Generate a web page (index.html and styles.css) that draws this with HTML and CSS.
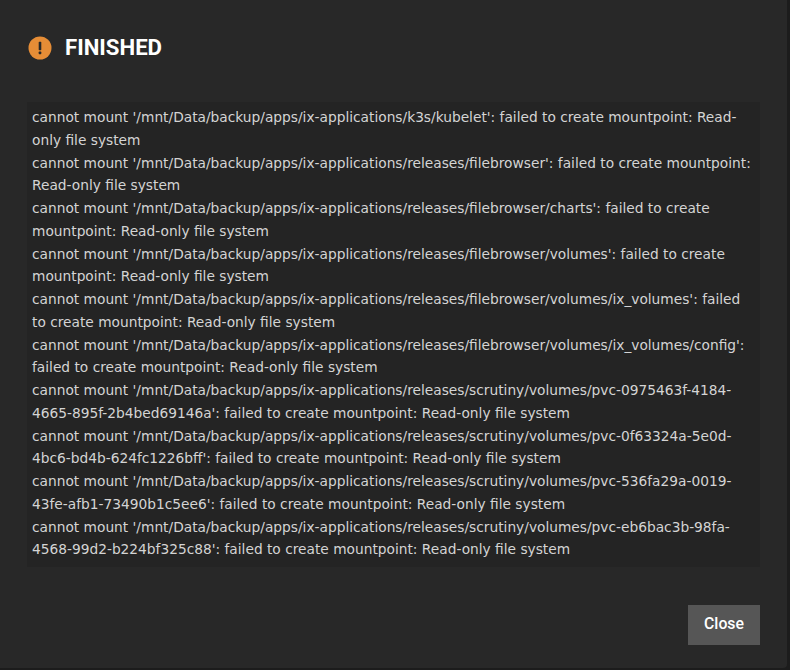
FILE: index.html
```html
<!DOCTYPE html>
<html lang="en">
<head>
<meta charset="utf-8">
<title>Finished</title>
<link rel="stylesheet" href="styles.css">
</head>
<body>
<div class="dialog">
  <header class="head">
    <svg class="icon" viewBox="0 0 24 24" width="24" height="24"><circle cx="12" cy="12" r="11.5" fill="#e68d36"/><rect x="10.7" y="5.8" width="2.6" height="8.4" rx="0.6" fill="#282828"/><rect x="10.7" y="15.6" width="2.6" height="2.6" rx="0.6" fill="#282828"/></svg>
    <h1 class="title">FINISHED</h1>
  </header>
  <pre class="log">cannot mount '/mnt/Data/backup/apps/ix-applications/k3s/kubelet': failed to create mountpoint: Read-only file system
cannot mount '/mnt/Data/backup/apps/ix-applications/releases/filebrowser': failed to create mountpoint: Read-only file system
cannot mount '/mnt/Data/backup/apps/ix-applications/releases/filebrowser/charts': failed to create mountpoint: Read-only file system
cannot mount '/mnt/Data/backup/apps/ix-applications/releases/filebrowser/volumes': failed to create mountpoint: Read-only file system
cannot mount '/mnt/Data/backup/apps/ix-applications/releases/filebrowser/volumes/ix_volumes': failed to create mountpoint: Read-only file system
cannot mount '/mnt/Data/backup/apps/ix-applications/releases/filebrowser/volumes/ix_volumes/config': failed to create mountpoint: Read-only file system
cannot mount '/mnt/Data/backup/apps/ix-applications/releases/scrutiny/volumes/pvc-0975463f-4184-4665-895f-2b4bed69146a': failed to create mountpoint: Read-only file system
cannot mount '/mnt/Data/backup/apps/ix-applications/releases/scrutiny/volumes/pvc-0f63324a-5e0d-4bc6-bd4b-624fc1226bff': failed to create mountpoint: Read-only file system
cannot mount '/mnt/Data/backup/apps/ix-applications/releases/scrutiny/volumes/pvc-536fa29a-0019-43fe-afb1-73490b1c5ee6': failed to create mountpoint: Read-only file system
cannot mount '/mnt/Data/backup/apps/ix-applications/releases/scrutiny/volumes/pvc-eb6bac3b-98fa-4568-99d2-b224bf325c88': failed to create mountpoint: Read-only file system</pre>
  <footer class="actions"><button class="close" type="button">Close</button></footer>
</div>
</body>
</html>
```
FILE: styles.css
```css
html, body { margin: 0; height: 100%; background: #1c1c1c; overflow: hidden; }
.dialog { box-sizing: border-box; width: 787px; height: 668px; background: #282828; border-radius: 0 0 4px 0; padding: 36px 27px 0 27px; display: flex; flex-direction: column; }
.head { display: flex; align-items: center; gap: 13px; height: 24px; padding-left: 1px; }
.icon { flex: none; }
.title { margin: 0; padding-bottom: 2px; font: 700 22.2px/22px Roboto, sans-serif; color: #fff; }
.log { margin: 42px 0 0; padding: 4px 5px 6px 5px; background: #242424; color: #d4d4d4; font: 400 13.76px/22.75px "DejaVu Sans", sans-serif; white-space: pre-wrap; overflow-wrap: break-word; }
.actions { display: flex; justify-content: flex-end; margin-top: 38px; }
.close { width: 72px; height: 40px; border: 0; padding: 0 0 2px; background: #565656; color: #fff; font: 500 15.8px/36px Roboto, sans-serif; }
```
